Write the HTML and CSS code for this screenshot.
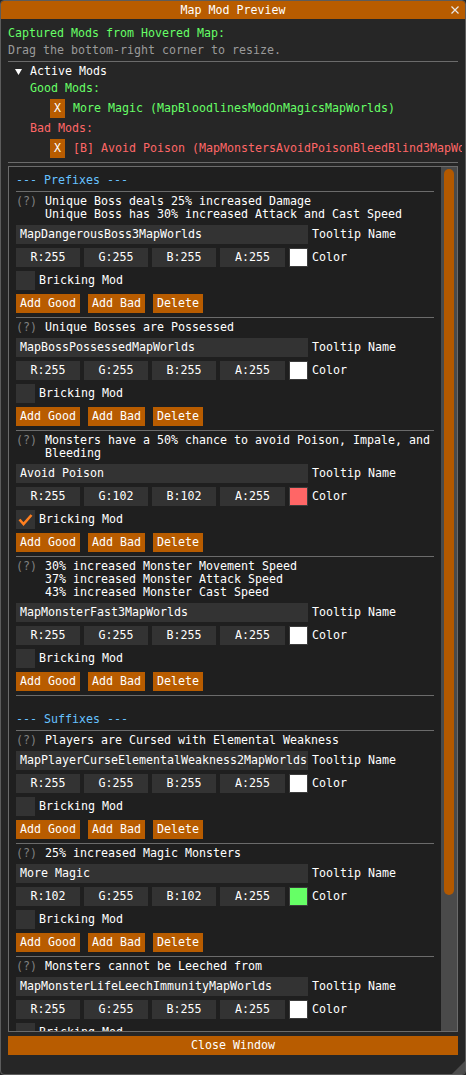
FILE: index.html
```html
<!DOCTYPE html>
<html lang="en">
<head>
    <meta charset="UTF-8">
    <title>Map Mod Preview</title>
    <link rel="stylesheet" href="styles.css">
</head>
<body>
<div class="window">
    <div class="titlebar">
        <span>Map Mod Preview</span>
        <svg class="close-x" width="8" height="8" viewBox="0 0 8 8"><path d="M0.5 0.5L7.5 7.5M7.5 0.5L0.5 7.5" stroke="#e8e8e8" stroke-width="1.2"/></svg>
    </div>
    <div class="content">
        <div class="line green">Captured Mods from Hovered Map:</div>
        <div class="line dim">Drag the bottom-right corner to resize.</div>
        <div class="sep"></div>

        <div class="active">
            <div class="line tree">
                <svg class="arrow" width="7" height="6" viewBox="0 0 7 6"><path d="M0 0H7L3.5 6Z" fill="#fff"/></svg>
                <span>Active Mods</span>
            </div>
            <div class="line indent green">Good Mods:</div>
            <div class="mod-row green">
                <button class="btn">X</button>
                <span>More Magic (MapBloodlinesModOnMagicsMapWorlds)</span>
            </div>
            <div class="line indent red">Bad Mods:</div>
            <div class="mod-row red">
                <button class="btn">X</button>
                <span>[B] Avoid Poison (MapMonstersAvoidPoisonBleedBlind3MapWorlds)</span>
            </div>
        </div>
        <div class="sep"></div>

        <div class="child">
            <div class="child-body">
                <div class="line blue">--- Prefixes ---</div>
                <div class="sep"></div>

                <div class="desc"><span class="q">(?)</span><div>Unique Boss deals 25% increased Damage<br>Unique Boss has 30% increased Attack and Cast Speed</div></div>
                <div class="row"><div class="field">MapDangerousBoss3MapWorlds</div><span>Tooltip Name</span></div>
                <div class="row"><div class="chan">R:255</div><div class="chan">G:255</div><div class="chan">B:255</div><div class="chan wide">A:255</div><div class="swatch" style="background:#ffffff"></div><span>Color</span></div>
                <div class="row"><div class="check"></div><span>Bricking Mod</span></div>
                <div class="buttons"><button class="btn">Add Good</button><button class="btn">Add Bad</button><button class="btn">Delete</button></div>
                <div class="sep"></div>

                <div class="desc"><span class="q">(?)</span><div>Unique Bosses are Possessed</div></div>
                <div class="row"><div class="field">MapBossPossessedMapWorlds</div><span>Tooltip Name</span></div>
                <div class="row"><div class="chan">R:255</div><div class="chan">G:255</div><div class="chan">B:255</div><div class="chan wide">A:255</div><div class="swatch" style="background:#ffffff"></div><span>Color</span></div>
                <div class="row"><div class="check"></div><span>Bricking Mod</span></div>
                <div class="buttons"><button class="btn">Add Good</button><button class="btn">Add Bad</button><button class="btn">Delete</button></div>
                <div class="sep"></div>

                <div class="desc"><span class="q">(?)</span><div>Monsters have a 50% chance to avoid Poison, Impale, and<br>Bleeding</div></div>
                <div class="row"><div class="field">Avoid Poison</div><span>Tooltip Name</span></div>
                <div class="row"><div class="chan">R:255</div><div class="chan">G:102</div><div class="chan">B:102</div><div class="chan wide">A:255</div><div class="swatch" style="background:#ff6666"></div><span>Color</span></div>
                <div class="row">
                    <div class="check"><svg width="19" height="19" viewBox="0 0 19 19"><path d="M3.5 9.5L7.5 14L15.5 5" fill="none" stroke="#ff7f1f" stroke-width="2.6"/></svg></div>
                    <span>Bricking Mod</span>
                </div>
                <div class="buttons"><button class="btn">Add Good</button><button class="btn">Add Bad</button><button class="btn">Delete</button></div>
                <div class="sep"></div>

                <div class="desc"><span class="q">(?)</span><div>30% increased Monster Movement Speed<br>37% increased Monster Attack Speed<br>43% increased Monster Cast Speed</div></div>
                <div class="row"><div class="field">MapMonsterFast3MapWorlds</div><span>Tooltip Name</span></div>
                <div class="row"><div class="chan">R:255</div><div class="chan">G:255</div><div class="chan">B:255</div><div class="chan wide">A:255</div><div class="swatch" style="background:#ffffff"></div><span>Color</span></div>
                <div class="row"><div class="check"></div><span>Bricking Mod</span></div>
                <div class="buttons"><button class="btn">Add Good</button><button class="btn">Add Bad</button><button class="btn">Delete</button></div>
                <div class="sep"></div>

                <div class="spacer"></div>
                <div class="line blue">--- Suffixes ---</div>
                <div class="sep"></div>

                <div class="desc"><span class="q">(?)</span><div>Players are Cursed with Elemental Weakness</div></div>
                <div class="row"><div class="field">MapPlayerCurseElementalWeakness2MapWorlds</div><span>Tooltip Name</span></div>
                <div class="row"><div class="chan">R:255</div><div class="chan">G:255</div><div class="chan">B:255</div><div class="chan wide">A:255</div><div class="swatch" style="background:#ffffff"></div><span>Color</span></div>
                <div class="row"><div class="check"></div><span>Bricking Mod</span></div>
                <div class="buttons"><button class="btn">Add Good</button><button class="btn">Add Bad</button><button class="btn">Delete</button></div>
                <div class="sep"></div>

                <div class="desc"><span class="q">(?)</span><div>25% increased Magic Monsters</div></div>
                <div class="row"><div class="field">More Magic</div><span>Tooltip Name</span></div>
                <div class="row"><div class="chan">R:102</div><div class="chan">G:255</div><div class="chan">B:102</div><div class="chan wide">A:255</div><div class="swatch" style="background:#66ff66"></div><span>Color</span></div>
                <div class="row"><div class="check"></div><span>Bricking Mod</span></div>
                <div class="buttons"><button class="btn">Add Good</button><button class="btn">Add Bad</button><button class="btn">Delete</button></div>
                <div class="sep"></div>

                <div class="desc"><span class="q">(?)</span><div>Monsters cannot be Leeched from</div></div>
                <div class="row"><div class="field">MapMonsterLifeLeechImmunityMapWorlds</div><span>Tooltip Name</span></div>
                <div class="row"><div class="chan">R:255</div><div class="chan">G:255</div><div class="chan">B:255</div><div class="chan wide">A:255</div><div class="swatch" style="background:#ffffff"></div><span>Color</span></div>
                <div class="row"><div class="check"></div><span>Bricking Mod</span></div>
                <div class="buttons"><button class="btn">Add Good</button><button class="btn">Add Bad</button><button class="btn">Delete</button></div>
            </div>
            <div class="scroll-track"><div class="grab"></div></div>
        </div>

        <button class="btn close-btn">Close Window</button>
    </div>
    <div class="grip"></div>
</div>
</body>
</html>
```

FILE: styles.css
```css
* {
    box-sizing: border-box;
}
html, body {
    margin: 0;
    background: #262626;
}
body {
    font-family: "DejaVu Sans Mono", monospace;
    font-size: 11.63px;
    line-height: 13px;
    color: #ffffff;
}
.window {
    position: relative;
    width: 466px;
    height: 1075px;
    border: 1px solid #5c5c5c;
    border-radius: 4px;
    background: #262626;
    overflow: hidden;
}
.titlebar {
    position: relative;
    height: 18px;
    background: #b85c00;
    display: flex;
    align-items: center;
    justify-content: center;
}
.close-x {
    position: absolute;
    right: 6px;
    top: 5px;
}
.content {
    padding: 8px 7px 0;
    display: flex;
    flex-direction: column;
    gap: 4px;
}
.content > *,
.active > *,
.child-body > * {
    flex-shrink: 0;
}
.line {
    height: 13px;
    white-space: nowrap;
}
.green { color: #66ff66; }
.red { color: #ff6666; }
.dim { color: #9a9a9a; }
.blue { color: #66c2ff; }
.sep {
    height: 1px;
    background: #6b6b6b;
    margin-bottom: -1px;
}
.active {
    display: flex;
    flex-direction: column;
    gap: 4px;
    margin-right: -4px;
    overflow: hidden;
}
.tree {
    display: flex;
    align-items: center;
}
.arrow {
    margin-left: 7px;
    margin-right: 8px;
}
.indent {
    padding-left: 22px;
}
.mod-row {
    display: flex;
    align-items: center;
    gap: 8px;
    height: 19px;
    padding-left: 42px;
    white-space: nowrap;
}
.btn {
    height: 19px;
    padding: 0 4px;
    border: none;
    border-radius: 0;
    background: #b85c00;
    color: #ffffff;
    font: inherit;
    line-height: 19px;
    flex-shrink: 0;
}
.child {
    height: 866px;
    border: 1px solid #6b6b6b;
    background: #1f1f1f;
    display: flex;
}
.child-body {
    flex: 1;
    min-width: 0;
    padding: 7px 7px 0;
    display: flex;
    flex-direction: column;
    gap: 4px;
    overflow: hidden;
}
.desc {
    display: flex;
    gap: 8px;
    white-space: nowrap;
}
.q {
    color: #808080;
}
.row {
    display: flex;
    align-items: center;
    gap: 4px;
    height: 19px;
    white-space: nowrap;
}
.field {
    width: 292px;
    height: 19px;
    padding: 0 4px;
    background: #333333;
    line-height: 19px;
    overflow: hidden;
    flex-shrink: 0;
}
.chan {
    width: 64px;
    height: 19px;
    background: #333333;
    line-height: 19px;
    text-align: center;
    flex-shrink: 0;
}
.chan.wide {
    width: 65px;
}
.swatch {
    width: 19px;
    height: 19px;
    border: 1px solid #3c3c3c;
    flex-shrink: 0;
}
.check {
    width: 19px;
    height: 19px;
    background: #333333;
    flex-shrink: 0;
}
.check svg {
    display: block;
}
.buttons {
    display: flex;
    gap: 8px;
}
.spacer {
    height: 10px;
}
.scroll-track {
    width: 16px;
    background: #4a4a4a;
    padding: 2px 3px;
    flex-shrink: 0;
}
.grab {
    height: 726px;
    border-radius: 5px;
    background: #b35900;
}
.close-btn {
    width: 100%;
}
.grip {
    position: absolute;
    right: 0;
    bottom: 0;
    width: 13px;
    height: 13px;
    background: #4d4d4d;
    clip-path: polygon(100% 0, 100% 100%, 0 100%);
}
```
